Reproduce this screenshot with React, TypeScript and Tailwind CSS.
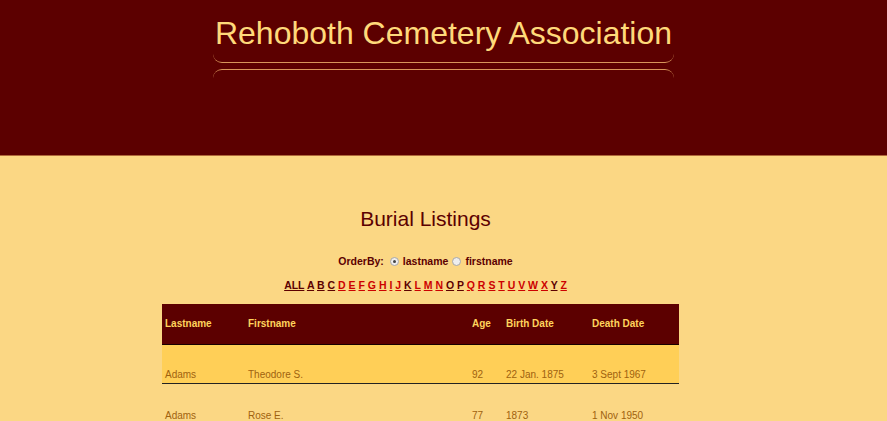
import React from "react";

const letters: { l: string; visited: boolean }[] = [
  { l: "ALL", visited: true },
  { l: "A", visited: true },
  { l: "B", visited: true },
  { l: "C", visited: true },
  { l: "D", visited: false },
  { l: "E", visited: false },
  { l: "F", visited: false },
  { l: "G", visited: false },
  { l: "H", visited: false },
  { l: "I", visited: false },
  { l: "J", visited: false },
  { l: "K", visited: true },
  { l: "L", visited: false },
  { l: "M", visited: false },
  { l: "N", visited: false },
  { l: "O", visited: true },
  { l: "P", visited: true },
  { l: "Q", visited: false },
  { l: "R", visited: false },
  { l: "S", visited: false },
  { l: "T", visited: false },
  { l: "U", visited: false },
  { l: "V", visited: false },
  { l: "W", visited: false },
  { l: "X", visited: false },
  { l: "Y", visited: true },
  { l: "Z", visited: false },
];

const rows = [
  { last: "Adams", first: "Theodore S.", age: "92", birth: "22 Jan. 1875", death: "3 Sept 1967", hl: true },
  { last: "Adams", first: "Rose E.", age: "77", birth: "1873", death: "1 Nov 1950", hl: false },
];

function Radio({ checked }: { checked: boolean }) {
  return (
    <span className="inline-flex items-center justify-center w-[9px] h-[9px] rounded-full border border-[#a8a8a8] bg-[#eeeeee] mx-[4px]">
      {checked && <span className="w-[3px] h-[3px] rounded-full bg-[#444]" />}
    </span>
  );
}

export default function App() {
  return (
    <div className="min-h-[421px] bg-[#fbd784] font-['Liberation_Sans',Arial,sans-serif]">
      <header className="h-[156px] bg-[#5c0000] border-b border-[#b0683a] pt-[17px]">
        <h1 className="text-center text-[32px] leading-none text-[#ffd97a]">
          Rehoboth Cemetery Association
        </h1>
        <div className="w-[461px] mx-auto">
          <div className="mt-[5px] h-[9px] border-b border-[#d8955a] rounded-b-[9px]" />
          <div className="mt-[6px] h-[20px] border-t border-[#d8955a] rounded-t-[9px]" />
        </div>
      </header>

      <main className="pt-[52px] pr-[36px] flex flex-col items-center text-[#5c0000]">
        <h2 className="text-[21px] leading-none">Burial Listings</h2>
        <div className="mt-[27px] flex items-center text-[10.5px] font-bold leading-none">
          <span className="mr-[2px]">OrderBy:</span>
          <Radio checked />
          <span>lastname</span>
          <Radio checked={false} />
          <span>firstname</span>
        </div>
        <div className="mt-[13px] text-[10.5px] font-bold leading-none whitespace-pre">
          {letters.map((x, i) => (
            <React.Fragment key={x.l}>
              {i > 0 && " "}
              <a
                href="#"
                className={
                  "underline " + (x.visited ? "text-[#5c0000]" : "text-[#cc0000]")
                }
              >
                {x.l}
              </a>
            </React.Fragment>
          ))}
        </div>

        <div className="mt-[14px] mr-[10px] w-[517px] text-[10px]">
          <div className="grid grid-cols-[83px_224px_34px_86px_90px] h-[41px] pb-[2px] items-center bg-[#5c0000] border-b border-[#1a0000] font-bold text-[#ffd35c]">
            <div className="pl-[3px]">Lastname</div>
            <div className="pl-[3px]">Firstname</div>
            <div className="pl-[3px]">Age</div>
            <div className="pl-[3px]">Birth Date</div>
            <div className="pl-[3px]">Death Date</div>
          </div>
          {rows.map((r, i) => (
            <div
              key={i}
              className={
                "grid grid-cols-[83px_224px_34px_86px_90px] h-[39px] items-end text-[#a0620f] " +
                (r.hl ? "bg-[#ffcf57] border-b border-[#222] pb-[1px]" : "pb-0")
              }
            >
              <div className="pl-[3px]">{r.last}</div>
              <div className="pl-[3px]">{r.first}</div>
              <div className="pl-[3px]">{r.age}</div>
              <div className="pl-[3px]">{r.birth}</div>
              <div className="pl-[3px]">{r.death}</div>
            </div>
          ))}
        </div>
      </main>
    </div>
  );
}
